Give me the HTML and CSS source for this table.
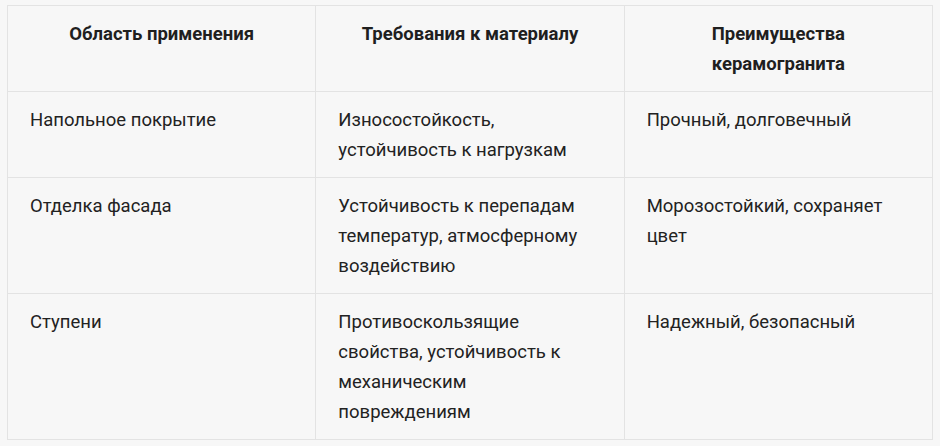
FILE: index.html
```html
<!DOCTYPE html>
<html lang="ru">
<head>
<meta charset="utf-8">
<link rel="stylesheet" href="styles.css">
</head>
<body>
<table class="tbl">
  <thead>
    <tr>
      <th>Область применения</th>
      <th>Требования к материалу</th>
      <th>Преимущества керамогранита</th>
    </tr>
  </thead>
  <tbody>
    <tr>
      <td>Напольное покрытие</td>
      <td>Износостойкость, устойчивость к нагрузкам</td>
      <td>Прочный, долговечный</td>
    </tr>
    <tr>
      <td>Отделка фасада</td>
      <td>Устойчивость к перепадам температур, атмосферному воздействию</td>
      <td>Морозостойкий, сохраняет цвет</td>
    </tr>
    <tr>
      <td>Ступени</td>
      <td>Противоскользящие свойства, устойчивость к механическим повреждениям</td>
      <td>Надежный, безопасный</td>
    </tr>
  </tbody>
</table>
</body>
</html>
```
FILE: styles.css
```css
html, body {
  margin: 0;
  background: #f7f7f7;
}
body {
  padding: 5px 7px;
  font-family: Roboto, "Noto Sans", sans-serif;
  font-size: 18.5px;
  line-height: 30px;
  color: #222;
}
.tbl {
  width: 926px;
  border-collapse: collapse;
  table-layout: fixed;
}
.tbl th, .tbl td {
  border: 1px solid #e3e3e3;
  padding: 13px 22px 12px;
  vertical-align: top;
  text-align: left;
}
.tbl th {
  font-weight: 700;
  text-align: center;
  color: #1f1f1f;
}
```
